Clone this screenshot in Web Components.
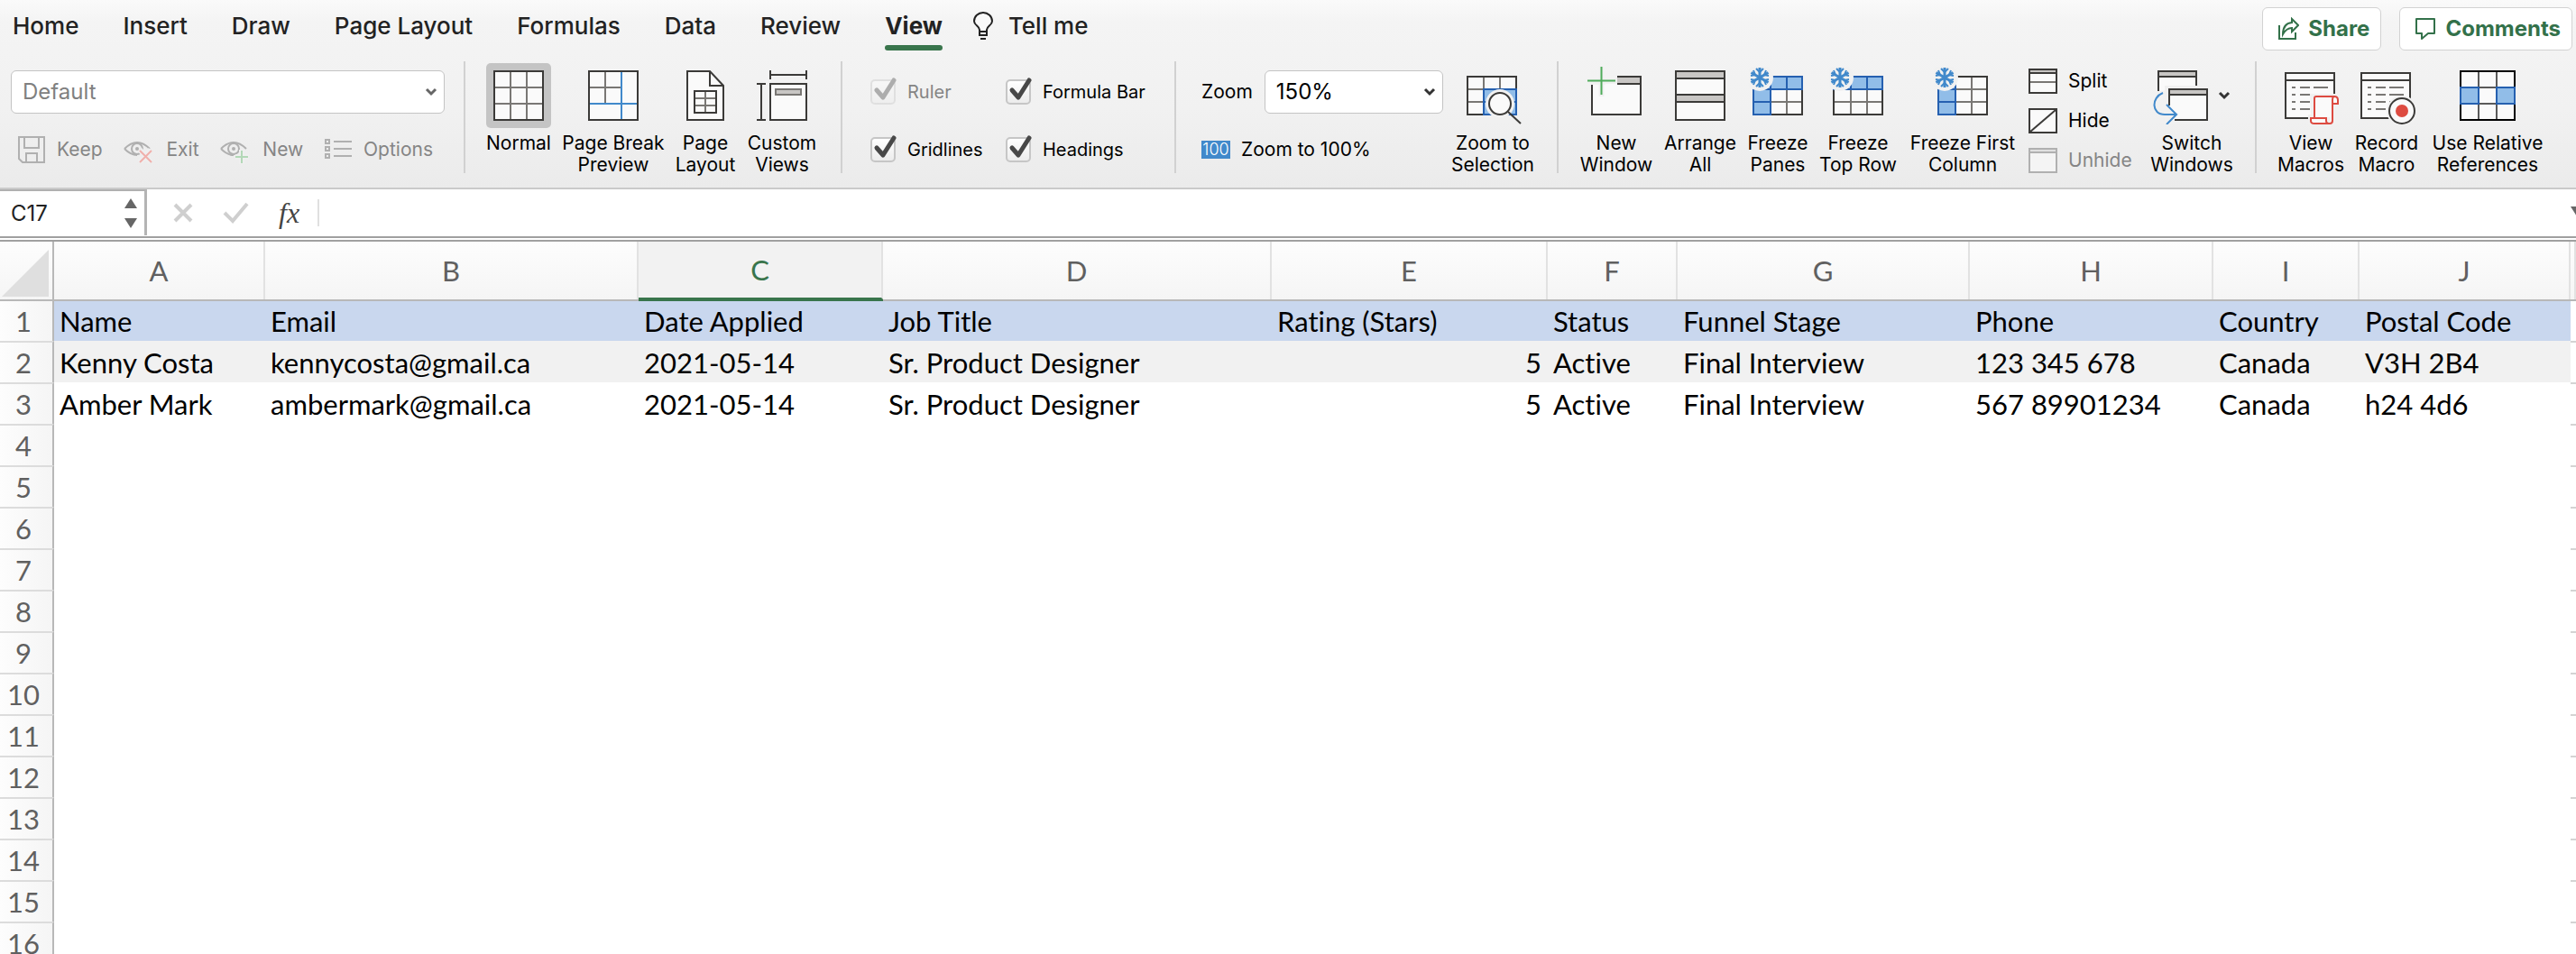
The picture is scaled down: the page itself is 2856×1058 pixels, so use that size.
<!DOCTYPE html>
<html lang="en">
<head>
<meta charset="utf-8">
<title>Candidates</title>
<style>
  html, body {
    margin: 0;
    height: 100%;
  }
  body {
    background: #fff;
    color: #000;
    font-family: Inter, "Liberation Sans", sans-serif;
    font-size: 20px;
    overflow: hidden;
  }
</style>
</head>
<body>
<workbook-app></workbook-app>

<script>
const DARK = "#3b3a38";
const GRAY = "#797774";
const BLUE = "#4189cb";
const DEEP = "#2560b0";
const SKY = "#91bde8";
const PAPER = "#fafafa";
const BAND = "#c8c6c4";
const RED = "#dd4b41";

const flake = `<circle cx="12" cy="12" r="15" fill="#f1f1f1"/>
  <g stroke="${BLUE}" stroke-width="3" fill="none">
    <path d="M12 1V23M2.500 6.500L21.500 17.500M2.500 17.500L21.500 6.500"/>
    <path stroke-width="2" d="M8 2L12 6L16 2M8 22L12 18L16 22M2 10L7 9L5 4M22 10L17 9L19 4M2 14L7 15L5 20M22 14L17 15L19 20"/>
  </g>`;

const sheet = `<rect x="5" y="11" width="54" height="42" fill="${PAPER}" stroke="${DARK}"/>
  <path d="M24 12V52M42 12V52M6 25H58M6 39H58" stroke="${GRAY}"/>`;

const macroList = `<rect x="4" y="7" width="54" height="50" fill="${PAPER}" stroke="${DARK}"/>
  <path d="M4 15H58" stroke="${DARK}"/>
  <path d="M11 23H15M20 23H31M35 23H51M11 31H15M20 31H31M35 31H51M11 39H15M20 39H31M35 39H51M11 47H15M20 47H31M35 47H51" stroke="${GRAY}"/>`;

const eye = `<path d="M2 15Q9 8 16 8T30 15M2 15Q9 22 16 22" stroke="#b0b0b0"/>
  <circle cx="16" cy="15" r="6" stroke="#b0b0b0"/><circle cx="16" cy="15" r="2" fill="#b0b0b0"/>`;

// name: [width, height, markup]
const ICONS = {
  normal: [64, 64, `<rect x="5" y="5" width="54" height="54" fill="${PAPER}" stroke="${DARK}"/>
    <path d="M23 6V58M41 6V58M6 23H58M6 41H58" stroke="${GRAY}"/>`],
  pageBreak: [64, 64, `<rect x="5" y="5" width="54" height="54" fill="${PAPER}" stroke="${DARK}"/>
    <path d="M23 6V41M6 23H41" stroke="${GRAY}"/><path d="M41 6V58M6 41H58" stroke="${BLUE}"/>`],
  pageLayout: [64, 64, `<path d="M12 5H37L52 21V59H12Z" fill="${PAPER}" stroke="${DARK}"/>
    <path d="M37 5V21H52" stroke="${DARK}"/>
    <path d="M32 28V50M21 35H43M21 43H43" stroke="${GRAY}"/>
    <rect x="20" y="27" width="24" height="24" stroke="${DARK}"/>`],
  customViews: [64, 64, `<rect x="19" y="19" width="40" height="40" fill="${PAPER}" stroke="${DARK}"/>
    <rect x="25" y="25" width="28" height="6" fill="${BAND}" stroke="${GRAY}"/>
    <path d="M19 9H59M19 4V14M59 4V14M9 19V59M4 19H14M4 59H14" stroke="${DARK}"/>`],
  zoomSelection: [64, 64, `<rect x="4" y="11" width="54" height="42" fill="${PAPER}" stroke="${DARK}"/>
    <path d="M22 12V52M40 12V52M5 25H57M5 39H57" stroke="${GRAY}"/>
    <rect x="22" y="25" width="36" height="28" fill="${SKY}" stroke="${DEEP}"/>
    <path d="M40 26V52M23 39H57" stroke="${DEEP}"/>
    <circle cx="40" cy="41" r="16" fill="#f1f1f1"/>
    <circle cx="40" cy="41" r="12" fill="${PAPER}" stroke="${DARK}"/>
    <path d="M49 50L63 63" stroke="${DARK}"/>`],
  newWindow: [64, 64, `<path d="M5 20V53H59V11H33V19H20V20Z" fill="${PAPER}"/>
    <rect x="33" y="11" width="26" height="8" fill="${BAND}"/>
    <path d="M5 20V53H59V11H33M33 19H59" stroke="${DARK}"/>
    <path d="M15.500 0V33M0 15.500H33" stroke="#f1f1f1" stroke-width="6"/>
    <path d="M15.500 0V31M0 15.500H31" stroke="#4fab5b"/>`],
  arrange: [64, 64, `<rect x="5" y="5" width="54" height="54" fill="${PAPER}" stroke="${DARK}"/>
    <rect x="5" y="5" width="54" height="8" fill="${BAND}" stroke="${DARK}"/>
    <rect x="5" y="31" width="54" height="8" fill="${BAND}" stroke="${DARK}"/>`],
  freezePanes: [64, 64, `${sheet}<path d="M5 11H59V25H24V53H5Z" fill="${SKY}" stroke="${DEEP}"/>
    <path d="M24 11V25H5M42 11V25M5 39H24" stroke="${DEEP}"/>${flake}`],
  freezeRow: [64, 64, `${sheet}<path d="M5 11H59V25H5Z" fill="${SKY}" stroke="${DEEP}"/>
    <path d="M24 11V25M42 11V25" stroke="${DEEP}"/>${flake}`],
  freezeColumn: [64, 64, `${sheet}<path d="M5 11H24V53H5Z" fill="${SKY}" stroke="${DEEP}"/>
    <path d="M5 25H24M5 39H24" stroke="${DEEP}"/>${flake}`],
  switchWindows: [64, 64, `<path d="M6 27V5H48V24" fill="${PAPER}"/>
    <rect x="6" y="5" width="42" height="6" fill="${BAND}"/>
    <path d="M6 27V5H48V22M6 11H48" stroke="${DARK}"/>
    <rect x="13" y="21" width="50" height="42" fill="#f1f1f1"/>
    <path d="M18 25H60V59H18Z" fill="${PAPER}"/>
    <rect x="18" y="25" width="42" height="6" fill="${BAND}"/>
    <path d="M18 43V25H60V59H24M18 31H60" stroke="${DARK}"/>
    <path d="M12 45L24 53L14 64" stroke="#f1f1f1" stroke-width="6"/>
    <path d="M11 29C-2 34 -2 53 13 53H26M15 42L26 53L15 64" stroke="${BLUE}"/>`],
  viewMacros: [64, 64, `${macroList}
    <path d="M31 30H64V64H29V53H32Z" fill="#f1f1f1"/>
    <path d="M36 56V35Q36 33 38 33H58Q62 33 62 37V41H56" fill="${PAPER}" stroke="${RED}"/>
    <path d="M56 41V37Q56 33 58 33M56 40V60Q56 63 53 63H36Q32 63 32 60V57H49V60Q49 63 53 63" fill="${PAPER}" stroke="${RED}"/>
    <path d="M37 36H55V56H37Z" fill="${PAPER}"/>`],
  recordMacro: [64, 64, `${macroList}<circle cx="49" cy="49" r="17" fill="#f1f1f1"/>
    <circle cx="49" cy="49" r="14" fill="${PAPER}" stroke="${DARK}"/><circle cx="49" cy="49" r="7" fill="${RED}"/>`],
  relative: [64, 64, `<rect x="2" y="5" width="60" height="54" fill="${PAPER}" stroke="#000"/>
    <path d="M22 6V58M42 6V58M3 23H61M3 41H61" stroke="#5a5a5a"/>
    <path d="M2 23H22V41H2ZM42 23H62V41H42Z" fill="${SKY}" stroke="${DEEP}"/>`],
  keep: [32, 32, `<path d="M2 2H30V30H6L2 26ZM8 2V14H24V2M10 30V20H22V30" stroke="#b0b0b0"/>`],
  exit: [36, 32, `${eye}<path d="M19 16L31 30M31 16L19 30" stroke="#efefef" stroke-width="6"/>
    <path d="M19 17L32 30M32 17L19 30" stroke="#f0b0ab"/>`],
  newView: [36, 32, `${eye}<path d="M25 16V32M18 24H33" stroke="#efefef" stroke-width="6"/>
    <path d="M25 17V31M18 24H32" stroke="#b3d8b7"/>`],
  options: [32, 32, `<path d="M2 5H6V9H2ZM2 13H6V17H2ZM2 21H6V25H2ZM11 7H31M11 15H31M11 23H31" stroke="#b0b0b0"/>`],
  split: [32, 28, `<rect x="1" y="1" width="30" height="26" fill="${PAPER}" stroke="${DARK}"/>
    <path d="M2 3H30" stroke="${BAND}"/><path d="M1 5H31" stroke="${DARK}"/><path d="M2 15H30" stroke="${GRAY}"/>`],
  hide: [32, 28, `<rect x="1" y="1" width="30" height="26" fill="${PAPER}" stroke="${DARK}"/><path d="M2 26L30 2" stroke="${DARK}"/>`],
  unhide: [32, 28, `<rect x="1" y="1" width="30" height="26" fill="#f4f4f4" stroke="#b0b0b0"/>
    <path d="M2 3H30" stroke="#e0e0e0"/><path d="M1 5H31" stroke="#b0b0b0"/>`],
  chevron: [14, 10, `<path d="M2 2L7 7L12 2" stroke="currentColor" stroke-width="3"/>`],
  bulb: [24, 32, `<path d="M8 23V20C8 16 2 15 2 10.500A10 9.500 0 0 1 22 10.500C22 15 16 16 16 20V23" fill="${PAPER}" stroke="#222"/>
    <path d="M7 22H17M7 26H17M8 22V26M16 22V26M9 30H15" stroke="#222"/>`],
  share: [24, 26, `<path d="M2 9V24H20V17" stroke="#33714a"/>
    <path d="M16 2L23 9L16 16V12Q10 12 6 19Q6 7 16 6Z" stroke="#33714a"/>`],
  comment: [24, 26, `<path d="M2 2H22V18H15L8 24V18H2Z" stroke="#33714a" stroke-linejoin="round"/>`],
  cancel: [24, 26, `<path d="M3 4L21 22M21 4L3 22" stroke="#cfcfcf" stroke-width="4"/>`],
  accept: [30, 26, `<path d="M2 13L11 22L27 3" stroke="#cfcfcf" stroke-width="4"/>`],
  up: [14, 12, `<path d="M7 0L14 11H0Z" fill="#666" stroke="none"/>`],
  down: [14, 12, `<path d="M7 11L14 0H0Z" fill="#666" stroke="none"/>`]
};

// one class per element: template cloned into an open shadow root
function define(name, html, setup) {
  const template = document.createElement("template");
  template.innerHTML = html;
  customElements.define(name, class extends HTMLElement {
    constructor() {
      super();
      this.attachShadow({ mode: "open" });
      this.shadowRoot.appendChild(template.content.cloneNode(true));
    }
    connectedCallback() {
      if (setup && !this.ready) {
        this.ready = true;
        setup(this, this.shadowRoot);
      }
    }
  });
}

define("app-icon", `
<style>
  :host { display: block; flex: none; }
  svg { display: block; }
</style>`, (host, root) => {
  const [w, h, art] = ICONS[host.getAttribute("name")];
  root.innerHTML += `<svg width="${w}" height="${h}" viewBox="0 0 ${w} ${h}" fill="none" stroke-width="2" aria-hidden="true">${art}</svg>`;
});

define("ribbon-tab", `
<style>
  :host { display: block; }
  button {
    display: flex;
    flex-direction: column;
    gap: 4px;
    border: 0;
    padding: 12px 2px 0;
    background: none;
    color: #222;
    font: 500 26px/34px Inter, sans-serif;
    white-space: nowrap;
  }
  button::after { content: ""; align-self: stretch; height: 6px; border-radius: 3px; }
  :host([selected]) button { font-weight: 700; }
  :host([selected]) button::after { background: #39754c; }
</style>
<button role="tab"><slot></slot></button>`, (host, root) => {
  root.querySelector("button").setAttribute("aria-selected", host.hasAttribute("selected"));
});

define("action-button", `
<style>
  :host { display: block; }
  button {
    display: flex;
    align-items: center;
    gap: 10px;
    height: 48px;
    padding: 0 12px 0 16px;
    border: 1px solid #d2d2d2;
    border-radius: 6px;
    background: #fff;
    color: #33714a;
    font: 700 24px/30px Inter, sans-serif;
  }
</style>
<button><slot name="icon"></slot><slot></slot></button>`);

define("ribbon-group", `
<style>
  :host {
    display: flex;
    gap: 12px;
    height: 124px;
    padding: 0 24px;
    border-right: 2px solid #d1d1d1;
  }
  :host([last]) { border: 0; }
</style>
<slot></slot>`);

// large button, icon above a one or two line caption
define("ribbon-button", `
<style>
  :host { display: block; }
  button {
    display: flex;
    flex-direction: column;
    align-items: center;
    gap: 5px;
    width: 100%;
    border: 0;
    padding: 2px 0 0;
    background: none;
    color: #000;
    font: 400 21px/24px Inter, sans-serif;
    white-space: nowrap;
  }
  .pic { display: flex; align-items: center; justify-content: center; gap: 8px; min-width: 64px; height: 72px; border-radius: 5px; }
  :host([active]) .pic { min-width: 72px; background: #c4c4c4; }
</style>
<button><span class="pic"><slot name="icon"></slot></span><span><slot></slot></span></button>`);

define("ribbon-command", `
<style>
  :host { display: block; }
  button {
    display: flex;
    align-items: center;
    gap: 12px;
    border: 0;
    padding: 0;
    background: none;
    color: #000;
    font: 400 21px/28px Inter, sans-serif;
    white-space: nowrap;
  }
  button:disabled { color: #858585; }
</style>
<button><slot name="icon"></slot><slot></slot></button>`, (host, root) => {
  root.querySelector("button").disabled = host.hasAttribute("disabled");
});

define("ribbon-check", `
<style>
  :host { display: block; }
  label { display: flex; align-items: center; gap: 13px; font: 400 20px/28px Inter, sans-serif; white-space: nowrap; }
  .box { display: grid; }
  input, svg { grid-area: 1 / 1; }
  input {
    appearance: none;
    box-sizing: border-box;
    width: 28px;
    height: 28px;
    margin: 0;
    border: 2px solid #c6c6c6;
    border-radius: 5px;
    background: linear-gradient(#fff, #ececec);
  }
  svg { display: block; overflow: visible; pointer-events: none; }
  :host([disabled]) { color: #858585; }
  :host([disabled]) .box { opacity: 0.4; }
</style>
<label><span class="box"><input type="checkbox" checked><svg width="28" height="28" fill="none" stroke="#484848" stroke-width="5"><path d="M7 12L14 20L26 1" stroke-linecap="round" stroke-linejoin="round"/></svg></span><slot></slot></label>`, (host, root) => {
  root.querySelector("input").disabled = host.hasAttribute("disabled");
});

define("ribbon-select", `
<style>
  :host { display: block; }
  label { display: flex; align-items: center; gap: 13px; font: 400 21px/24px Inter, sans-serif; }
  .field { display: grid; align-items: center; flex: 1; }
  select, app-icon { grid-area: 1 / 1; }
  select {
    appearance: none;
    box-sizing: border-box;
    width: 100%;
    height: 48px;
    padding: 0 12px;
    border: 1px solid #c4c4c4;
    border-radius: 6px;
    background: #fff;
    color: #000;
    font: 400 24px/30px Inter, sans-serif;
    opacity: 1;
  }
  select:disabled { color: #808080; }
  app-icon { justify-self: end; margin-right: 8px; pointer-events: none; color: #333; }
  :host([disabled]) app-icon { color: #666; }
</style>
<label><span class="caption"></span><span class="field"><select></select><app-icon name="chevron"></app-icon></span></label>`, (host, root) => {
  const select = root.querySelector("select");
  const caption = root.querySelector(".caption");
  select.add(new Option(host.getAttribute("value")));
  select.disabled = host.hasAttribute("disabled");
  if (host.hasAttribute("label")) {
    caption.textContent = host.getAttribute("label");
  } else {
    caption.remove();
    select.setAttribute("aria-label", "Sheet view");
  }
});

define("app-ribbon", `
<style>
  :host {
    display: block;
    background: linear-gradient(#fafafa, #f4f4f4 24px, #f1f1f1 120px, #ebebeb);
    border-bottom: 2px solid #cacaca;
  }
  .top { display: flex; justify-content: space-between; height: 60px; }
  .tabs { display: flex; gap: 45px; padding-left: 12px; }
  .tell { display: flex; gap: 14px; margin-left: -14px; }
  .tell app-icon { margin-top: 13px; }
  .actions { display: flex; gap: 20px; padding: 8px 4px 0 0; }
  .groups { display: flex; padding: 8px 0 16px; }
  .views { padding: 0 21px 0 12px; }
  .views > div { width: 481px; }
  .modes { padding: 0 25px 0 23px; }
  .stack { display: flex; flex-direction: column; padding-top: 10px; }
  .row { display: flex; flex: none; align-items: center; justify-content: space-between; height: 80px; padding: 0 13px 0 7px; box-sizing: border-box; }
  .row.fit { justify-content: flex-start; padding: 0; }
  .checks { padding: 0 24px 0 31px; }
  .checks > div { display: grid; grid-template-columns: 150px 163px; grid-template-rows: 68px 60px; align-items: center; }
  .zoom { gap: 8px; padding-left: 28px; }
  .zoom .stack { width: 268px; }
  .hundred { width: 32px; height: 20px; overflow: hidden; background: #4189cb; color: #fff; font: 300 18px/20px Inter, sans-serif; text-align: center; }
  .arrangement { padding-right: 26px; }
  .windows { display: flex; flex-direction: column; gap: 16px; width: 126px; padding: 8px 0 0 1px; box-sizing: border-box; }
  .caret { color: #333; }
  .w66 { width: 66px; }
  .w72 { width: 72px; }
  .w80 { width: 80px; }
  .w82 { width: 82px; }
  .w88 { width: 88px; }
  .w94 { width: 94px; }
  .w114 { width: 114px; }
  .w120 { width: 120px; }
  .w128 { width: 128px; }
</style>
<div class="top">
  <div class="tabs" role="tablist">
    <ribbon-tab>Home</ribbon-tab>
    <ribbon-tab>Insert</ribbon-tab>
    <ribbon-tab>Draw</ribbon-tab>
    <ribbon-tab>Page Layout</ribbon-tab>
    <ribbon-tab>Formulas</ribbon-tab>
    <ribbon-tab>Data</ribbon-tab>
    <ribbon-tab>Review</ribbon-tab>
    <ribbon-tab selected>View</ribbon-tab>
    <div class="tell"><app-icon name="bulb"></app-icon><ribbon-tab>Tell me</ribbon-tab></div>
  </div>
  <div class="actions">
    <action-button><app-icon slot="icon" name="share"></app-icon>Share</action-button>
    <action-button><app-icon slot="icon" name="comment"></app-icon>Comments</action-button>
  </div>
</div>
<div class="groups">
  <ribbon-group class="views">
    <div class="stack">
      <ribbon-select value="Default" disabled></ribbon-select>
      <div class="row">
        <ribbon-command disabled><app-icon slot="icon" name="keep"></app-icon>Keep</ribbon-command>
        <ribbon-command disabled><app-icon slot="icon" name="exit"></app-icon>Exit</ribbon-command>
        <ribbon-command disabled><app-icon slot="icon" name="newView"></app-icon>New</ribbon-command>
        <ribbon-command disabled><app-icon slot="icon" name="options"></app-icon>Options</ribbon-command>
      </div>
    </div>
  </ribbon-group>
  <ribbon-group class="modes">
    <ribbon-button class="w72" active><app-icon slot="icon" name="normal"></app-icon>Normal</ribbon-button>
    <ribbon-button class="w114"><app-icon slot="icon" name="pageBreak"></app-icon>Page Break<br>Preview</ribbon-button>
    <ribbon-button class="w66"><app-icon slot="icon" name="pageLayout"></app-icon>Page<br>Layout</ribbon-button>
    <ribbon-button class="w80"><app-icon slot="icon" name="customViews"></app-icon>Custom<br>Views</ribbon-button>
  </ribbon-group>
  <ribbon-group class="checks">
    <div>
      <ribbon-check disabled>Ruler</ribbon-check>
      <ribbon-check>Formula Bar</ribbon-check>
      <ribbon-check>Gridlines</ribbon-check>
      <ribbon-check>Headings</ribbon-check>
    </div>
  </ribbon-group>
  <ribbon-group class="zoom">
    <div class="stack">
      <ribbon-select label="Zoom" value="150%"></ribbon-select>
      <div class="row fit">
        <ribbon-command><span slot="icon" class="hundred">100</span>Zoom to 100%</ribbon-command>
      </div>
    </div>
    <ribbon-button class="w94"><app-icon slot="icon" name="zoomSelection"></app-icon>Zoom to<br>Selection</ribbon-button>
  </ribbon-group>
  <ribbon-group class="arrangement">
    <ribbon-button class="w80"><app-icon slot="icon" name="newWindow"></app-icon>New<br>Window</ribbon-button>
    <ribbon-button class="w82"><app-icon slot="icon" name="arrange"></app-icon>Arrange<br>All</ribbon-button>
    <ribbon-button class="w66"><app-icon slot="icon" name="freezePanes"></app-icon>Freeze<br>Panes</ribbon-button>
    <ribbon-button class="w88"><app-icon slot="icon" name="freezeRow"></app-icon>Freeze<br>Top Row</ribbon-button>
    <ribbon-button class="w120"><app-icon slot="icon" name="freezeColumn"></app-icon>Freeze First<br>Column</ribbon-button>
    <div class="windows">
      <ribbon-command><app-icon slot="icon" name="split"></app-icon>Split</ribbon-command>
      <ribbon-command><app-icon slot="icon" name="hide"></app-icon>Hide</ribbon-command>
      <ribbon-command disabled><app-icon slot="icon" name="unhide"></app-icon>Unhide</ribbon-command>
    </div>
    <ribbon-button class="w88"><app-icon slot="icon" name="switchWindows"></app-icon><app-icon slot="icon" class="caret" name="chevron"></app-icon>Switch<br>Windows</ribbon-button>
  </ribbon-group>
  <ribbon-group last>
    <ribbon-button class="w72"><app-icon slot="icon" name="viewMacros"></app-icon>View<br>Macros</ribbon-button>
    <ribbon-button class="w72"><app-icon slot="icon" name="recordMacro"></app-icon>Record<br>Macro</ribbon-button>
    <ribbon-button class="w128"><app-icon slot="icon" name="relative"></app-icon>Use Relative<br>References</ribbon-button>
  </ribbon-group>
</div>`);

define("formula-bar", `
<style>
  :host { display: flex; height: 52px; background: #fff; border-bottom: 6px double #a0a0a0; overflow: hidden; }
  .name { display: flex; align-items: center; box-sizing: border-box; width: 163px; height: 51px; padding: 0 8px 0 12px; border-top: 2px solid #b0b0b0; border-right: 3px solid #b4b4b4; }
  input { min-width: 0; flex: 1; padding: 0; border: 0; background: none; color: #222; font: 400 24px/30px Inter, sans-serif; }
  .spin { display: flex; flex-direction: column; gap: 10px; }
  button { padding: 0; border: 0; background: none; }
  .tools { display: flex; align-items: center; gap: 32px; padding: 0 20px 0 28px; }
  .fx { color: #444; font: italic 400 32px/40px "Liberation Serif", serif; }
  .rule { width: 2px; height: 30px; margin: 11px 12px 0 0; background: #e0e0e0; }
  .more { flex: none; width: 6px; overflow: hidden; padding-bottom: 2px; }
</style>
<div class="name">
  <input aria-label="Name box" value="C17">
  <div class="spin">
    <button aria-label="Previous"><app-icon name="up"></app-icon></button>
    <button aria-label="Next"><app-icon name="down"></app-icon></button>
  </div>
</div>
<div class="tools">
  <button aria-label="Cancel"><app-icon name="cancel"></app-icon></button>
  <button aria-label="Enter"><app-icon name="accept"></app-icon></button>
  <button class="fx">fx</button>
</div>
<div class="rule"></div>
<input aria-label="Formula">
<button class="more" aria-label="Expand formula bar"><app-icon name="down"></app-icon></button>`);

define("sheet-grid", `
<style>
  :host { display: block; overflow: hidden; font-family: Lato, Carlito, sans-serif; }
  table { width: 100%; border-collapse: separate; border-spacing: 0; table-layout: fixed; }
  th, td { box-sizing: border-box; padding: 0; font: 400 31px/44px Lato, Carlito, sans-serif; font-variant-ligatures: none; white-space: nowrap; }
  thead th { height: 64px; border-right: 2px solid #e2e2e2; background: linear-gradient(#fdfdfd, #f5f5f5); color: #606060; }
  thead th:first-child { border-right-color: #b8b8b8; }
  thead th.on { border-bottom: 2px solid #39754c; background: #f2f2f2; color: #39754c; }
  .all { display: block; width: 52px; height: 52px; margin: 6px 0 0 2px; border: 0; padding: 0; background: #dfdfdf; clip-path: polygon(100% 0, 100% 100%, 0 100%); }
  tbody th { height: 46px; padding-right: 6px; border-top: 2px solid #dcdcdc; border-right: 2px solid #b8b8b8; background: linear-gradient(to right, #fdfdfd, #f5f5f5); color: #606060; }
  td { height: 46px; padding: 0 7px 0 6px; border-top: 2px solid transparent; text-align: left; }
  td.num { text-align: right; }
  td:last-child { border-top-color: #d4d4d4; }
  tbody tr:first-child > * { border-top-color: #b8b8b8; }
  tbody tr:first-child > td.on { border-top-color: #39754c; }
  tr.head td:not(:last-child) { background: #c9d7ee; }
  tr.band td:not(:last-child) { background: #f1f1f1; }
</style>
<table>
  <colgroup></colgroup>
  <thead><tr></tr></thead>
  <tbody></tbody>
</table>`, (host, root) => {
  const widths = [60, 234, 414, 271, 431, 306, 144, 324, 270, 162, 234];
  const letters = "ABCDEFGHIJ".split("");
  const rows = [
    ["Name", "Email", "Date Applied", "Job Title", "Rating (Stars)", "Status", "Funnel Stage", "Phone", "Country", "Postal Code"],
    ["Kenny Costa", "kennycosta@gmail.ca", "2021-05-14", "Sr. Product Designer", 5, "Active", "Final Interview", "123 345 678", "Canada", "V3H 2B4"],
    ["Amber Mark", "ambermark@gmail.ca", "2021-05-14", "Sr. Product Designer", 5, "Active", "Final Interview", "567 89901234", "Canada", "h24 4d6"]
  ];
  const styles = ["head", "band"];
  root.querySelector("colgroup").innerHTML = widths.map(w => `<col style="width: ${w}px">`).join("") + "<col>";
  root.querySelector("thead tr").innerHTML = `<th><button class="all" aria-label="Select all"></button></th>` +
    letters.map(l => `<th scope="col" class="${l === "C" ? "on" : ""}">${l}</th>`).join("") + "<th></th>";
  let body = "";
  for (let r = 0; r < 16; r++) {
    const cells = letters.map((l, c) => {
      const value = rows[r] ? rows[r][c] : "";
      const cls = [typeof value === "number" ? "num" : "", l === "C" ? "on" : ""].join(" ").trim();
      return `<td class="${cls}">${value}</td>`;
    });
    body += `<tr class="${styles[r] || ""}"><th scope="row">${r + 1}</th>${cells.join("")}<td></td></tr>`;
  }
  root.querySelector("tbody").innerHTML = body;
});

define("workbook-app", `
<style>
  :host { display: flex; flex-direction: column; height: 100vh; overflow: hidden; }
  app-ribbon, formula-bar { flex: none; }
  sheet-grid { flex: 1; min-height: 0; }
</style>
<app-ribbon></app-ribbon>
<formula-bar></formula-bar>
<sheet-grid></sheet-grid>`);
</script>
</body>
</html>
